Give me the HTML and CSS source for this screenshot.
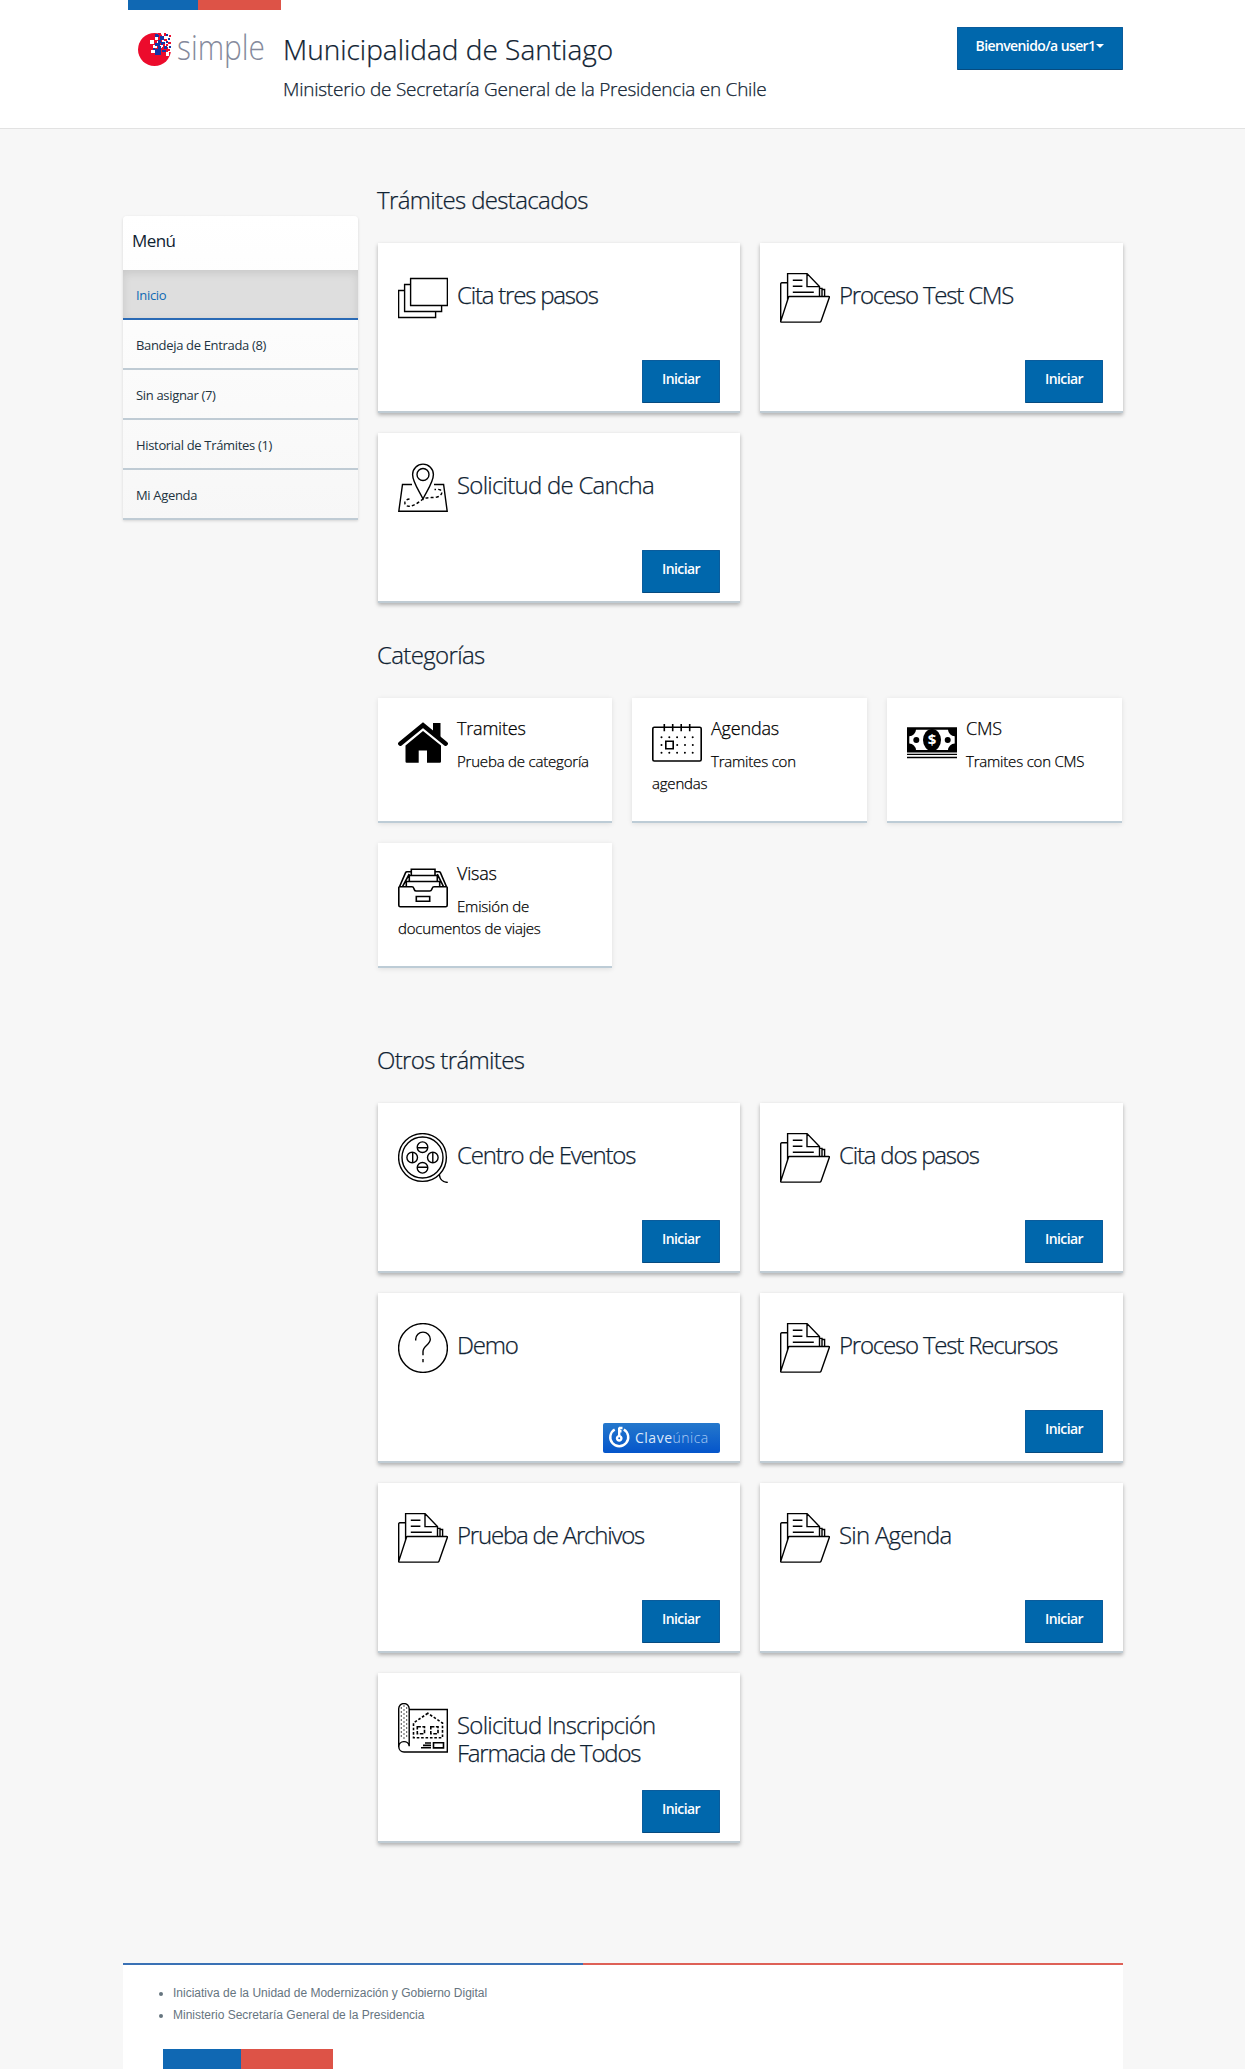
FILE: index.html
```
<!DOCTYPE html>
<html lang="es">
<head>
<meta charset="utf-8">
<title>Simple - Municipalidad de Santiago</title>
<link rel="stylesheet" href="styles.css">
</head>
<body>
<svg class="sprite" aria-hidden="true">
  <symbol id="i-stack" viewBox="0 0 50 50">
    <path d="M12.6 5.5h36.8v27H12.6zM12.6 11.5h-6v27h37v-6M6.6 17.5h-6v27h37v-6"/>
  </symbol>
  <symbol id="i-folder" viewBox="0 0 50 50">
    <path d="M7.6 27V.6H27l12.5 13v9.8M27 .6v13h12.5M39.5 15.4H42v8M42 16.5h2.6v7M7.6 9.8H1.8Q.7 9.8.7 11v37.6M9.4 23.5h39.4q.8 0 .6.8L41 48.3q-.3.8-1.2.8H1.5q-1 0-.7-1L8.5 24.2q.2-.7.9-.7zM12.8 7.2h9.6M12.8 13.2h9.6M12.8 19.2h21"/>
  </symbol>
  <symbol id="i-map" viewBox="0 0 50 50">
    <path d="M14 21.5H4.5L.8 48.3h48.4l-3.6-26.8H36M25 36C22 29 14.6 19.500 14.600 11.500a10.400 10.400 0 0 1 20.800 0C35.400 19.500 28 29 25 36z"/>
    <circle cx="25" cy="11.500" r="6"/>
    <path stroke-dasharray="3 2.200" d="M11.500 36C7 36.500 5.500 40 8 42.500c4 2.500 11-1.500 17-6.500 4-2 9-1 14-2 5-1.500 6-5 3.500-7-2-1-4-.6-6-.5"/>
  </symbol>
  <symbol id="i-home" viewBox="0 0 50 50">
    <path class="solid" d="M35 5h7.500v17L35 16zM25 13l18 14.500v16q0 1.200-1.200 1.200H29V32.500h-8.300v12.200H8.700q-1.200 0-1.200-1.200v-16z"/>
    <path class="roof" d="M2.300 25.700L25 7.200l22.700 18.500"/>
  </symbol>
  <symbol id="i-calendar" viewBox="0 0 50 50">
    <rect class="bold" x=".8" y="9.200" width="48.400" height="33.800" rx="1.500"/>
    <path class="bold" d="M12.300 6v7.300M20.700 6v7.300M29.200 6v7.300M37.700 6v7.300M13.800 23.300h7.400v7.400h-7.400z"/>
    <path class="dots" d="M9.500 19.300h31.500M9.500 34.700h31.500M9.500 27h.1M25.200 27h16"/>
  </symbol>
  <symbol id="i-cash" viewBox="0 0 50 50">
    <path class="solid" d="M0 9.300h50V34.500H0zM0 35.800h50v1.300H0zM0 38.800h50v1.500H0z"/>
    <path class="paper" d="M9 11.800h32a7 7 0 0 0 6.700 6.500v7.200a7 7 0 0 0-6.700 6.500H9a7 7 0 0 0-6.700-6.500v-7.200A7 7 0 0 0 9 11.800z"/>
    <ellipse class="solid" cx="25" cy="22" rx="9" ry="11"/>
    <circle class="solid" cx="9.300" cy="22" r="3"/><circle class="solid" cx="40.700" cy="22" r="3"/>
    <text class="dollar" x="25" y="27.400" text-anchor="middle">$</text>
  </symbol>
  <symbol id="i-tray" viewBox="0 0 50 50">
    <path class="bold" d="M.8 24.500q0-.8.8-.8H14q1.300 0 1.700 1.300l.6 1.600q.5 1.400 2 1.400h13.400q1.500 0 2-1.400l.6-1.600q.4-1.300 1.700-1.300h12.400q.8 0 .8.800V42.200q0 1.500-1.500 1.500H2.300Q.8 43.700.8 42.200zM1.500 23.700L7.600 9.600q.4-.9 1.400-.9h4.300M48.500 23.700L42.400 9.600q-.4-.9-1.400-.9h-4M13.300 12.500V6.300H37v6.200M11.300 18.500v-6h28v6M8.300 23.700v-5.200h33.400v5.200M4.500 23.700L11.300 11M45.500 23.700L39.300 11M18.300 33.500h13.400v4.800H18.300z"/>
  </symbol>
  <symbol id="i-reel" viewBox="0 0 50 50">
    <circle cx="24.500" cy="24.500" r="23.900"/><circle cx="24.500" cy="24.500" r="20.500"/>
    <circle cx="24.500" cy="14.200" r="5.300"/><circle cx="24.500" cy="34.800" r="5.300"/>
    <circle cx="14.200" cy="24.500" r="5.300"/><circle cx="34.800" cy="24.500" r="5.300"/>
    <path d="M19.200 14.700h10.600M19.200 34.300h10.600M14.700 19.200v10.600M34.800 19.200v10.600M41.300 41.500c.5 4.500 3.500 7.800 8.500 7.900"/>
  </symbol>
  <symbol id="i-help" viewBox="0 0 50 50">
    <circle cx="25" cy="25" r="24.400"/>
    <path d="M17.700 17.500v-1.200a7.300 7.200 0 0 1 14.600 0c0 5.200-7.300 6.700-7.300 12.200v3.700M25 36v3.200"/>
  </symbol>
  <symbol id="i-plan" viewBox="0 0 50 50">
    <path d="M11.300 6.500h38V49H6a5.200 5.200 0 1 1 5.200-5.700V5.800a5.250 5.250 0 0 0-10.500 0V44"/>
    <path class="dots tight" d="M3.300 5v32M8.700 5v32M6 3v36"/>
    <path class="bold" stroke-dasharray="2.600 1.800" d="M29.800 10.300L15.500 20v14.700h29V20z"/>
    <path class="bold" stroke-dasharray="3.600 1.500" d="M19.300 23.700h7.200v7h-7.200zM32.800 23.700H40v7h-7.200z"/>
    <path class="bold" d="M27 40h6M25 42.400h8M23 44.800h10M35.500 39.700h10v5.200h-10z"/>
  </symbol>
</svg>

<header class="header">
  <div class="container header-row">
    <div class="brand">
      <div class="flag"><i></i><i></i></div>
      <svg class="logo" viewBox="0 0 130 40" width="130" height="40">
        <circle cx="16.500" cy="16.500" r="16.500" fill="#ec0b2c"/>
        <path fill="#fff" d="M24 0h9v19h-3v-5h-3v-4h-3zM12 7h4v4h-4zM15 12h4v3h-4zM13 17h4v3h-4zM17 4h3v3h-3zM19 8h3v3h-3zM28 19h3v4h-3zM22 12h3v3h-3z"/>
        <path fill="#1238a8" d="M17 1h4v3h-4zM22 3h4v4h-4zM20 7h3v3h-3zM17 10h5v3h-5zM23 9h4v3h-4zM20 13h3v3h-3zM17 16h6v6h-6zM26 13h3v3h-3zM28 1h2v2h-2zM30 5h2v2h-2zM28 8h2v2h-2zM24 17h4v2h-4zM31 13h2v2h-2zM15 15h2v2h-2z"/>
        <path fill="#ec0b2c" d="M20 0h3v2h-3zM26 0h2v3h-2zM31 2h2v2h-2zM26 6h3v2h-3zM30 9h3v2h-3zM25 11h2v2h-2zM28 11h2v2h-2zM24 14h2v3h-2zM29 16h3v2h-3zM24 20h3v3h-3z"/>
        <text class="wordmark" x="39" y="27" textLength="88" lengthAdjust="spacingAndGlyphs">simple</text>
      </svg>
    </div>
    <div class="titles">
      <h1>Municipalidad de Santiago</h1>
      <p>Ministerio de Secretaría General de la Presidencia en Chile</p>
    </div>
    <a class="btn user">Bienvenido/a user1<span class="caret"></span></a>
  </div>
</header>

<div class="container layout">
  <nav class="menu">
    <div class="menu-title">Menú</div>
    <a class="active">Inicio</a>
    <a>Bandeja de Entrada (8)</a>
    <a>Sin asignar (7)</a>
    <a>Historial de Trámites (1)</a>
    <a>Mi Agenda</a>
  </nav>
  <main>
    <section>
      <h2>Trámites destacados</h2>
      <div class="grid two">
        <article class="card"><div class="head"><svg class="icon"><use href="#i-stack"/></svg><h3>Cita tres pasos</h3></div><a class="btn">Iniciar</a></article>
        <article class="card"><div class="head"><svg class="icon"><use href="#i-folder"/></svg><h3>Proceso Test CMS</h3></div><a class="btn">Iniciar</a></article>
        <article class="card"><div class="head"><svg class="icon"><use href="#i-map"/></svg><h3 class="loose">Solicitud de Cancha</h3></div><a class="btn">Iniciar</a></article>
      </div>
    </section>
    <section class="categories">
      <h2>Categorías</h2>
      <div class="grid three">
        <article class="category"><svg class="icon"><use href="#i-home"/></svg><h4>Tramites</h4><p>Prueba de categoría</p></article>
        <article class="category"><svg class="icon"><use href="#i-calendar"/></svg><h4>Agendas</h4><p>Tramites con agendas</p></article>
        <article class="category"><svg class="icon"><use href="#i-cash"/></svg><h4>CMS</h4><p>Tramites con CMS</p></article>
        <article class="category"><svg class="icon"><use href="#i-tray"/></svg><h4>Visas</h4><p>Emisión de documentos de viajes</p></article>
      </div>
    </section>
    <section class="others">
      <h2>Otros trámites</h2>
      <div class="grid two">
        <article class="card"><div class="head"><svg class="icon"><use href="#i-reel"/></svg><h3>Centro de Eventos</h3></div><a class="btn">Iniciar</a></article>
        <article class="card"><div class="head"><svg class="icon"><use href="#i-folder"/></svg><h3>Cita dos pasos</h3></div><a class="btn">Iniciar</a></article>
        <article class="card"><div class="head"><svg class="icon"><use href="#i-help"/></svg><h3>Demo</h3></div>
          <a class="clave"><svg viewBox="0 0 24 24" width="24" height="24"><path d="M7.700 3.500A9 9 0 1 0 16.800 3.500"/><path d="M12.200 10V1.500M12 2h3.500M12 5.300h2.500"/><circle cx="12.200" cy="12.300" r="2.200"/></svg><span>Clave<em>única</em></span></a></article>
        <article class="card"><div class="head"><svg class="icon"><use href="#i-folder"/></svg><h3>Proceso Test Recursos</h3></div><a class="btn">Iniciar</a></article>
        <article class="card"><div class="head"><svg class="icon"><use href="#i-folder"/></svg><h3>Prueba de Archivos</h3></div><a class="btn">Iniciar</a></article>
        <article class="card"><div class="head"><svg class="icon"><use href="#i-folder"/></svg><h3 class="loose">Sin Agenda</h3></div><a class="btn">Iniciar</a></article>
        <article class="card"><div class="head"><svg class="icon"><use href="#i-plan"/></svg><h3><span class="loose">Solicitud Inscripción</span> Farmacia de Todos</h3></div><a class="btn">Iniciar</a></article>
      </div>
    </section>
  </main>
</div>

<footer class="container footer">
  <div class="stripe"></div>
  <ul>
    <li>Iniciativa de la Unidad de Modernización y Gobierno Digital</li>
    <li>Ministerio Secretaría General de la Presidencia</li>
  </ul>
  <div class="footer-flag"><i></i><i></i></div>
</footer>
</body>
</html>
```
FILE: styles.css
```
* { box-sizing: border-box; }
body {
  margin: 0;
  background: #f7f7f7;
  color: #0f2232;
  font-family: "Open Sans", "Noto Sans", sans-serif;
}
h1, h2, h3, h4, p, ul { margin: 0; padding: 0; font-weight: 300; }
h1, h2, h3, h4, p { -webkit-text-stroke: 0.25px currentColor; }
.sprite { display: block; width: 0; height: 0; position: absolute; }
.container { width: 1000px; margin: 0 auto 0 123px; }

/* Header */
.header { height: 129px; background: #fff; border-bottom: 1px solid #e2e2e2; }
.header-row { display: flex; align-items: flex-start; }
.brand { width: 160px; padding-left: 5px; }
.flag { display: flex; width: 153px; height: 10px; }
.flag i:first-child { width: 70px; background: #1068b3; }
.flag i:last-child { width: 83px; background: #dd5347; }
.logo { display: block; margin: 23px 0 0 10px; }
.wordmark { font: 300 35px "Open Sans", sans-serif; fill: #858a9c; }
.titles { flex: 1; padding-top: 32px; }
.titles h1 { font-size: 28px; line-height: 34px; letter-spacing: 0; }
.titles p { margin-top: 11px; font-size: 19px; line-height: 24px; letter-spacing: -0.24px; }

.btn {
  display: block;
  width: 78px;
  height: 43px;
  background: #0067ac;
  border: 1px solid #0a5c9c;
  border-bottom-color: #064b80;
  border-radius: 1px;
  color: #fff;
  font-size: 14px;
  font-weight: 600;
  line-height: 35px;
  letter-spacing: -0.6px;
  text-align: center;
  white-space: nowrap;
}
.user { width: 166px; margin-top: 27px; }
.caret {
  display: inline-block;
  margin-left: 1px;
  border: 4px solid transparent;
  border-top-color: #fff;
  border-bottom: 0;
  vertical-align: 3px;
}

/* Columns */
.layout { display: flex; gap: 20px; }
.menu {
  width: 235px;
  height: 304px;
  margin-top: 87px;
  border-radius: 4px 4px 0 0;
  background: linear-gradient(#fff, #f7f7f7);
  box-shadow: 0 1px 3px rgba(0, 0, 0, .14);
}
.menu-title { height: 54px; padding-left: 9px; font-size: 17px; line-height: 50px; letter-spacing: -0.6px; font-weight: 400; }
.menu a {
  display: block;
  height: 50px;
  padding-left: 13px;
  border-bottom: 2px solid #bfcbd4;
  color: #22333f;
  font-size: 13px;
  line-height: 50px;
  letter-spacing: -0.33px;
}
.menu a.active {
  background: #dedede;
  border-color: #2a6ab5;
  box-shadow: inset 0 3px 8px rgba(0, 0, 0, .1);
  color: #0f69b4;
}
main { flex: 1; padding-top: 56px; }
h2 { margin-bottom: 29px; font-size: 24px; line-height: 29px; letter-spacing: -0.64px; text-indent: -1px; }
.categories { margin-top: 37px; }
.others { margin-top: 77px; }
.grid { display: grid; gap: 20px; }
.two { grid-template-columns: 362px 363px; }
.three { grid-template-columns: 234px 235px 235px; }

/* Cards */
.card {
  display: flex;
  flex-direction: column;
  justify-content: space-between;
  align-items: flex-end;
  height: 170px;
  padding: 30px 20px 8px;
  background: #fff;
  border-bottom: 2px solid #bfcbd3;
  box-shadow: 0 2px 4px rgba(0, 0, 0, .3);
}
.head { display: flex; align-self: stretch; gap: 9px; }
h3 { flex: 1; padding-top: 8px; font-size: 24px; line-height: 28px; letter-spacing: -1.2px; }
.loose { letter-spacing: -0.76px; }
.icon {
  flex: none;
  width: 50px;
  height: 50px;
  fill: none;
  stroke: #000;
  stroke-width: 1.4;
}
.solid { fill: #000; stroke: none; }
.paper { fill: #fff; stroke: none; }
.bold { stroke-width: 1.6; }
.roof { stroke-width: 4.4; stroke-linecap: round; }
.dots { stroke-width: 2; stroke-linecap: round; stroke-dasharray: 0 7.8; }
.tight { stroke-width: 1.3; stroke-dasharray: 0 4; }
.dollar { font: 700 15px "Open Sans", sans-serif; fill: #fff; stroke: none; }

.clave {
  display: flex;
  align-items: center;
  gap: 4px;
  width: 117px;
  height: 30px;
  padding-left: 4px;
  border-radius: 2px;
  background: linear-gradient(#2578cc, #0455cb);
  color: #dce9fa;
  font-size: 14px;
  line-height: 28px;
  letter-spacing: 0.5px;
}
.clave svg { fill: none; stroke: #fff; stroke-width: 2.400; }
.clave em { font-style: normal; font-weight: 300; color: #a9cbf4; }

.category {
  height: 125px;
  padding: 19px 20px 20px;
  background: #fff;
  border-bottom: 2px solid #bdccd6;
  box-shadow: 0 1px 5px rgba(0, 0, 0, .1);
  color: #000;
}
.category .icon { float: left; margin: 1px 9px 0 0; }
.category h4 { margin-bottom: 11px; font-size: 18px; line-height: 22px; letter-spacing: -0.2px; }
.category p { font-size: 15px; line-height: 22px; letter-spacing: -0.2px; }

/* Footer */
.footer { height: 106px; margin-top: 120px; background: #fff; overflow: hidden; }
.stripe { height: 2px; background: linear-gradient(90deg, #3a71b5 46%, #de6157 46%); }
.footer ul {
  padding: 17px 0 0 50px;
  color: #66757f;
  font: 12px/22px "Liberation Sans", Arial, sans-serif;
}
.footer-flag { display: flex; height: 30px; margin: 23px 0 0 40px; }
.footer-flag i:first-child { width: 78px; background: #1068b3; }
.footer-flag i:last-child { width: 92px; background: #dd5347; }
```
